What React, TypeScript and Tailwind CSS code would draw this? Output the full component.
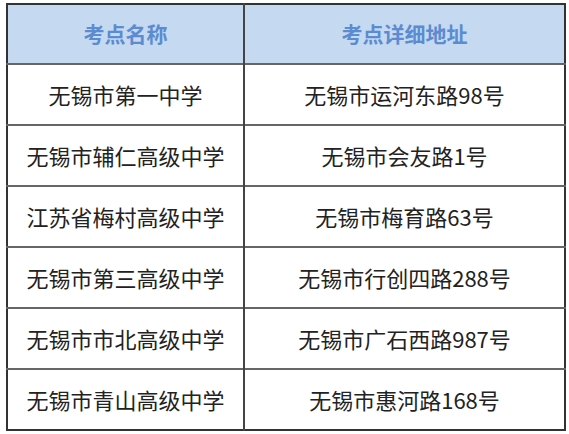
const rows = [
  ['无锡市第一中学', '无锡市运河东路98号'],
  ['无锡市辅仁高级中学', '无锡市会友路1号'],
  ['江苏省梅村高级中学', '无锡市梅育路63号'],
  ['无锡市第三高级中学', '无锡市行创四路288号'],
  ['无锡市市北高级中学', '无锡市广石西路987号'],
  ['无锡市青山高级中学', '无锡市惠河路168号'],
];

export default function App() {
  return (
    <div
      className="w-[569px] h-[434px] bg-white pt-[3px] pl-[6px]"
      style={{ fontFamily: '"Noto Sans CJK SC", "Noto Sans", sans-serif' }}
    >
      <table className="w-[560px] border-collapse border-2 border-[#333] table-fixed">
        <colgroup>
          <col className="w-[237px]" />
          <col />
        </colgroup>
        <thead>
          <tr className="h-[60px] bg-[#c5d9f1]">
            <th className="border-r-2 border-[#444] text-[21px] font-bold text-[#5b8bd0]">考点名称</th>
            <th className="text-[21px] font-bold text-[#5b8bd0]">考点详细地址</th>
          </tr>
        </thead>
        <tbody>
          {rows.map(([name, addr]) => (
            <tr key={name} className="h-[61px] border-t-2 border-[#666]">
              <td className="border-r-2 border-[#444] text-center text-[22px] text-[#222]">{name}</td>
              <td className="text-center text-[22px] text-[#222]">{addr}</td>
            </tr>
          ))}
        </tbody>
      </table>
    </div>
  );
}
